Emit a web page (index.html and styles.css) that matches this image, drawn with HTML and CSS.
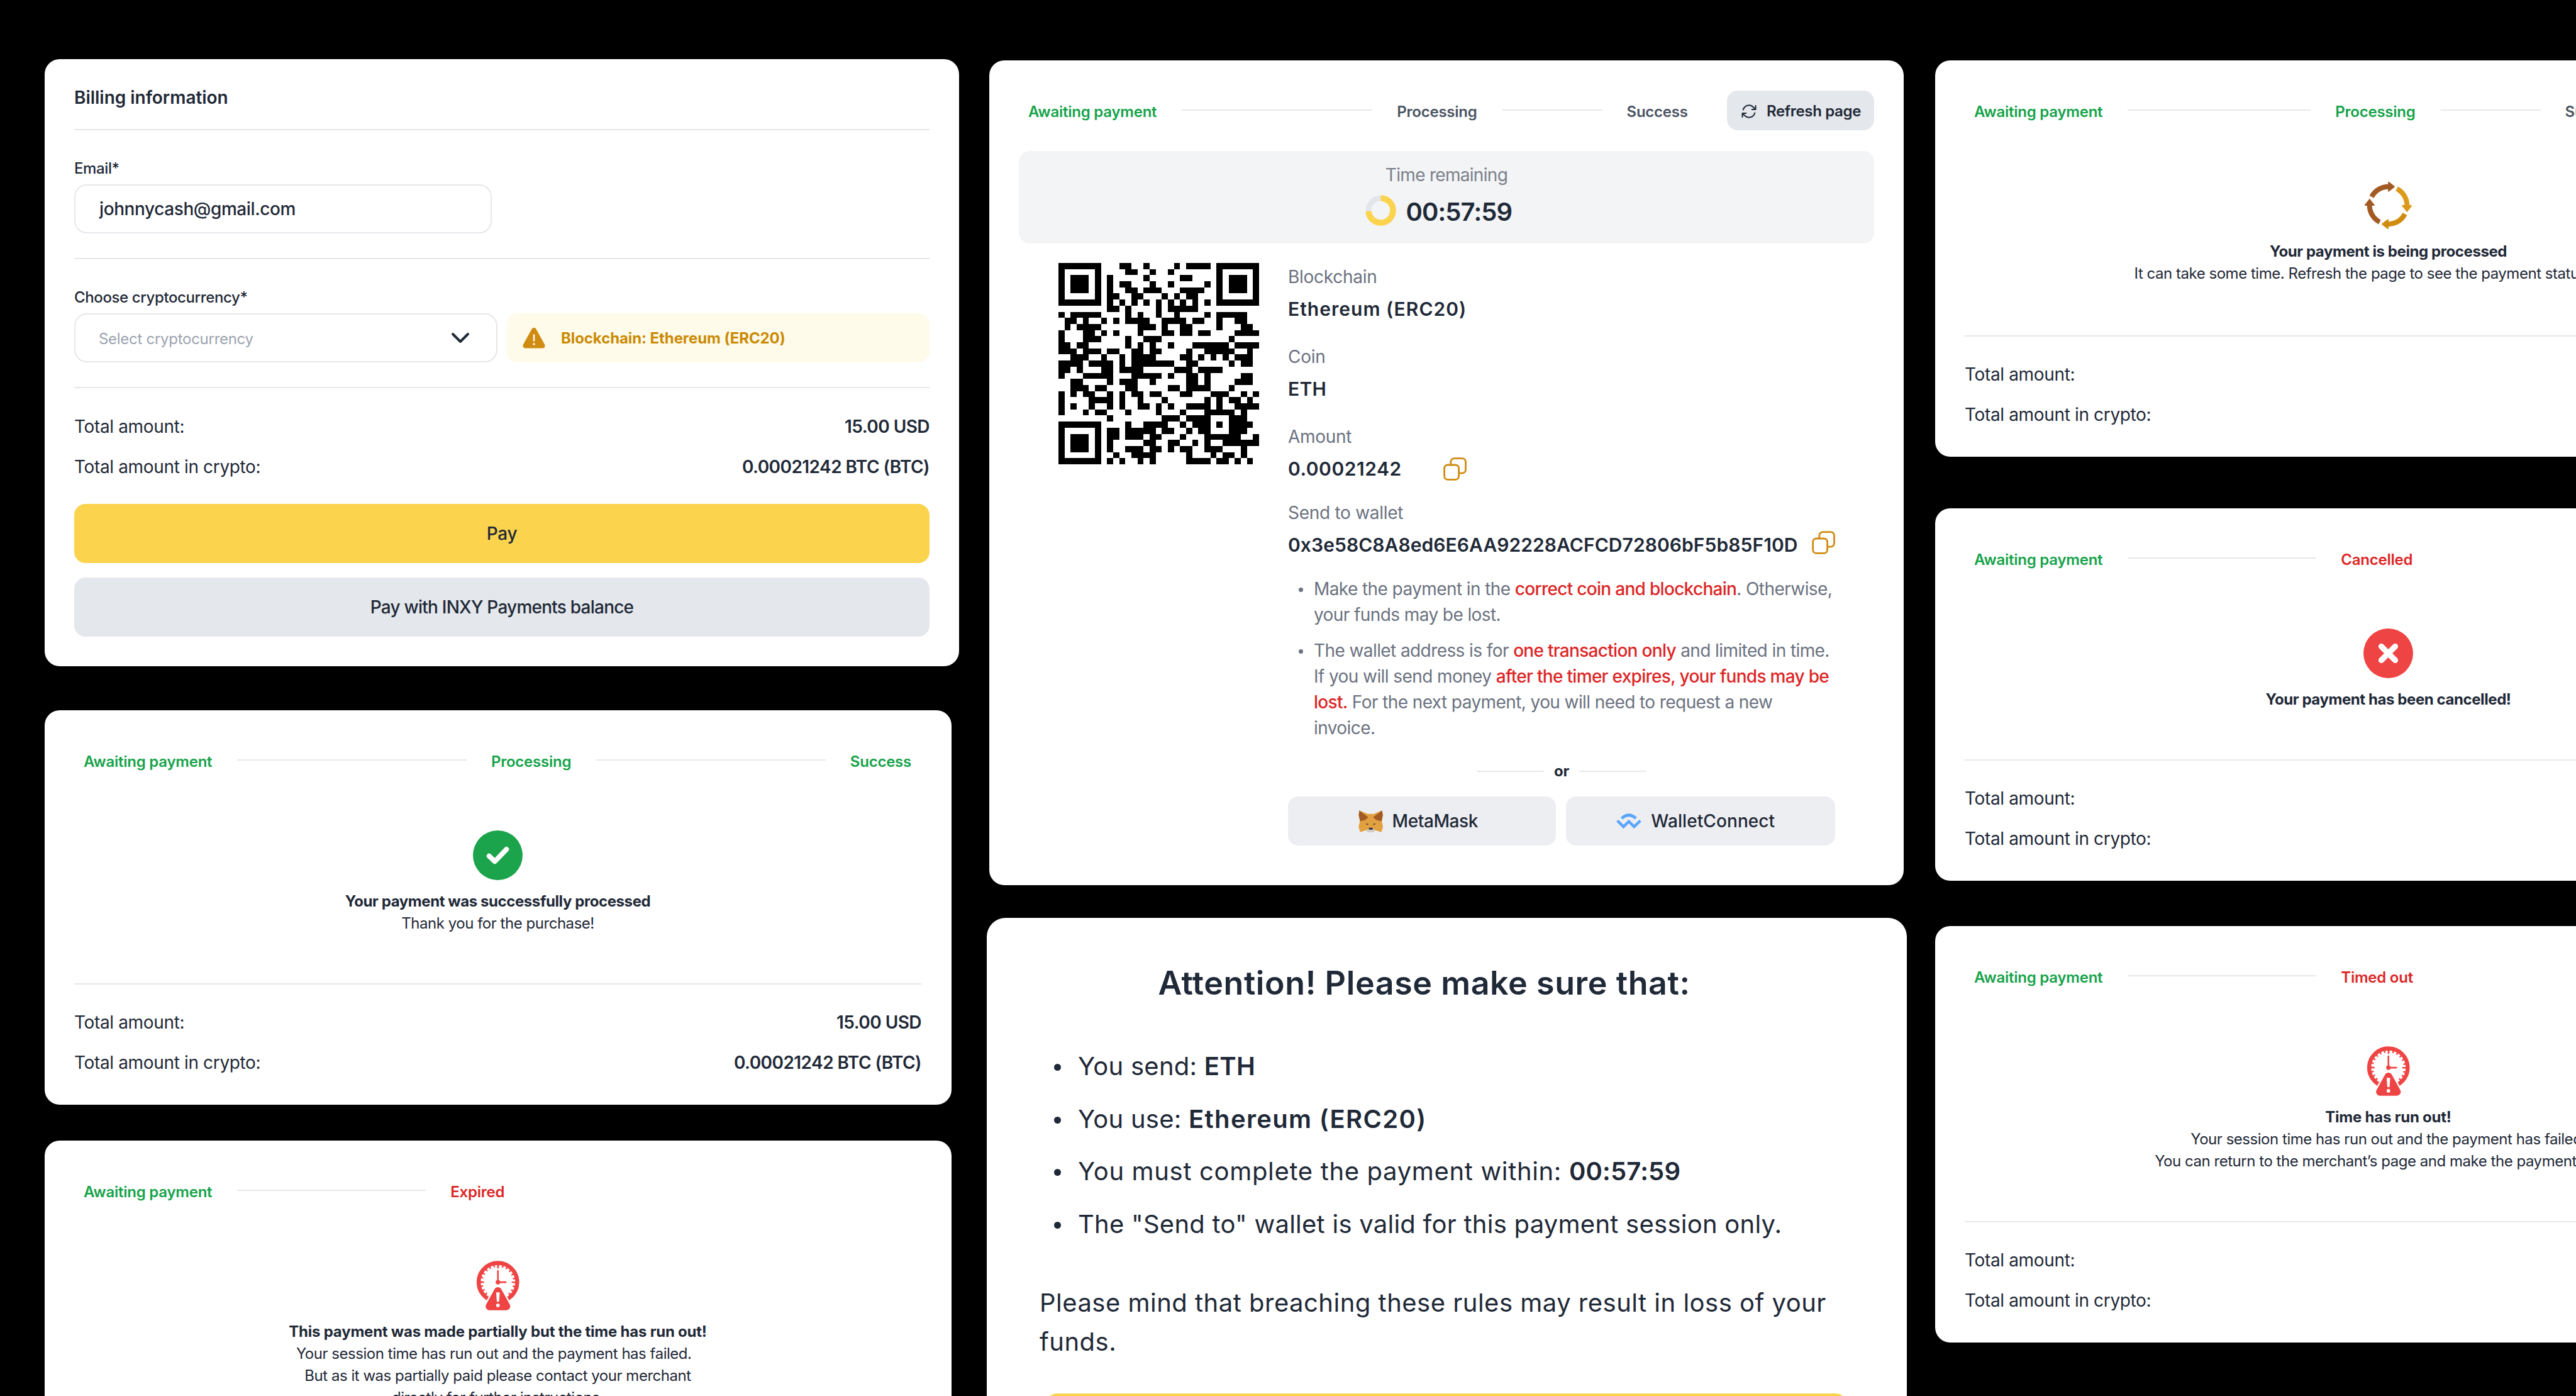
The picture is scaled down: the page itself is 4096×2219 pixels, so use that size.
FILE: index.html
```html
<!DOCTYPE html>
<html lang="en">
<head>
    <meta charset="UTF-8">
    <meta name="viewport" content="width=device-width, initial-scale=1.0">
    <title>Crypto payment screens</title>
    <link rel="stylesheet" href="styles.css">
</head>
<body>
    <!-- shared icons -->
    <svg class="sprite" width="0" height="0">
        <symbol id="icon-copy" viewBox="0 0 37 37">
            <rect x="1.6" y="12" width="23" height="23.4" rx="5.5" fill="none" stroke="#d08c12" stroke-width="2.8"/>
            <path d="M11.8 12V7.1a5.5 5.5 0 0 1 5.5-5.5H30a5.5 5.5 0 0 1 5.5 5.5v12.6a5.5 5.5 0 0 1-5.5 5.5h-5.2" fill="none" stroke="#d08c12" stroke-width="2.8"/>
        </symbol>
        <symbol id="icon-clock" viewBox="0 0 264 304">
            <circle cx="131" cy="131" r="119" fill="none" stroke="#ef4444" stroke-width="25"/>
            <circle cx="131" cy="131" r="102" fill="none" stroke="#ef4444" stroke-width="15" stroke-dasharray="9.5 17.2" stroke-dashoffset="4.75"/>
            <path d="M131 20v26M20 131h26M216 131h26" stroke="#ef4444" stroke-width="9"/>
            <path d="M131 61v70h49" fill="none" stroke="#ef4444" stroke-width="10" stroke-linecap="round"/>
            <circle cx="131" cy="131" r="14" fill="#ef4444"/>
            <path d="M131 186L79 280H183Z" fill="#fff" stroke="#fff" stroke-width="66" stroke-linejoin="round"/>
            <path d="M131 186L79 280H183Z" fill="#ef4444" stroke="#ef4444" stroke-width="48" stroke-linejoin="round"/>
            <path d="M120 194h22l-4 57h-14z" fill="#fff"/>
            <circle cx="131" cy="274" r="11" fill="#fff"/>
        </symbol>
    </svg>

    <div class="board">
        <div class="column column-left">
            <section class="card billing">
                <h2 class="billing-title">Billing information</h2>
                <div class="divider"></div>
                <label class="field-label">Email*</label>
                <div class="input email-input">johnnycash@gmail.com</div>
                <div class="divider"></div>
                <label class="field-label">Choose cryptocurrency*</label>
                <div class="crypto-row">
                    <div class="input select">
                        <span>Select cryptocurrency</span>
                        <svg width="30" height="18" viewBox="0 0 30 18"><path d="M3 3l12 12L27 3" fill="none" stroke="#1f2937" stroke-width="4" stroke-linecap="round" stroke-linejoin="round"/></svg>
                    </div>
                    <div class="notice">
                        <svg width="36" height="33" viewBox="0 0 36 33">
                            <path d="M18 4L4.5 28.500h27z" fill="#d08c12" stroke="#d08c12" stroke-width="8" stroke-linejoin="round"/>
                            <path d="M18 11.500v9" stroke="#fff" stroke-width="2.400" stroke-linecap="round"/>
                            <circle cx="18" cy="26" r="1.700" fill="#fff"/>
                        </svg>
                        <span>Blockchain: Ethereum (ERC20)</span>
                    </div>
                </div>
                <div class="divider"></div>
                <div class="total-row"><span>Total amount:</span><b>15.00 USD</b></div>
                <div class="total-row"><span>Total amount in crypto:</span><b>0.00021242 BTC (BTC)</b></div>
                <button class="btn btn-pay">Pay</button>
                <button class="btn btn-balance">Pay with INXY Payments balance</button>
            </section>

            <section class="card status success">
                <div class="steps">
                    <span class="done">Awaiting payment</span>
                    <i class="line line-fill"></i>
                    <span class="done">Processing</span>
                    <i class="line line-fill"></i>
                    <span class="done">Success</span>
                </div>
                <div class="result">
                    <svg class="result-icon" width="79" height="79" viewBox="0 0 100 100">
                        <circle cx="50" cy="50" r="50" fill="#1ba44b"/>
                        <path d="M32.500 51.500L44 62.500 67.500 38" fill="none" stroke="#fff" stroke-width="10" stroke-linecap="round" stroke-linejoin="round"/>
                    </svg>
                    <b>Your payment was successfully processed</b>
                    <p>Thank you for the purchase!</p>
                </div>
                <div class="divider"></div>
                <div class="total-row"><span>Total amount:</span><b>15.00 USD</b></div>
                <div class="total-row"><span>Total amount in crypto:</span><b>0.00021242 BTC (BTC)</b></div>
            </section>

            <section class="card status expired">
                <div class="steps">
                    <span class="done">Awaiting payment</span>
                    <i class="line"></i>
                    <span class="failed">Expired</span>
                </div>
                <div class="result">
                    <svg class="result-icon" width="68" height="79"><use href="#icon-clock"/></svg>
                    <b class="partial">This payment was made partially but the time has run out!</b>
                    <p>Your session time has run out and the payment has failed.&nbsp;&nbsp;</p>
                    <p>But as it was partially paid please contact your merchant</p>
                    <p>directly for further instructions.</p>
                </div>
                <div class="divider"></div>
                <div class="total-row"><span>Total amount:</span><b>15.00 USD</b></div>
                <div class="total-row"><span>Total amount in crypto:</span><b>0.00021242 BTC (BTC)</b></div>
            </section>
        </div>

        <div class="column column-center">
            <section class="card payment">
                <div class="payment-head">
                    <div class="steps">
                        <span class="done">Awaiting payment</span>
                        <i class="line line-wide"></i>
                        <span>Processing</span>
                        <i class="line line-short"></i>
                        <span>Success</span>
                    </div>
                    <button class="refresh">
                        <svg width="28" height="28" viewBox="0 0 24 24" fill="none" stroke="#1f2937" stroke-width="1.700" stroke-linecap="round" stroke-linejoin="round">
                            <path d="M16.023 9.348h4.992M2.985 19.644v-4.992h4.992m-4.993 0l3.181 3.183a8.250 8.250 0 0 0 13.803-3.700M4.031 9.865a8.250 8.250 0 0 1 13.803-3.700l3.181 3.182m0-4.991v4.990"/>
                        </svg>
                        <span>Refresh page</span>
                    </button>
                </div>
                <div class="timer">
                    <div class="timer-label">Time remaining</div>
                    <div class="timer-row">
                        <svg width="49" height="49" viewBox="0 0 49 49">
                            <circle cx="24.500" cy="24.500" r="19.500" fill="none" stroke="#e2e5ea" stroke-width="8.500"/>
                            <circle cx="24.500" cy="24.500" r="19.500" fill="none" stroke="#fcd34d" stroke-width="9.500" pathLength="100" stroke-dasharray="74 26" transform="rotate(-90 24.500 24.500)"/>
                        </svg>
                        <span class="timer-value">00:57:59</span>
                    </div>
                </div>
                <div class="payment-body">
                    <svg class="qr" id="qr" viewBox="0 0 33 33" preserveAspectRatio="none" shape-rendering="crispEdges"></svg>
                    <div class="details">
                        <div class="label">Blockchain</div>
                        <div class="value value-wide">Ethereum (ERC20)</div>
                        <div class="label">Coin</div>
                        <div class="value value-coin">ETH</div>
                        <div class="label">Amount</div>
                        <div class="value value-amount"><span>0.00021242</span><svg class="copy" width="37" height="37"><use href="#icon-copy"/></svg></div>
                        <div class="label label-wallet">Send to wallet</div>
                        <div class="value value-address"><span>0x3e58C8A8ed6E6AA92228ACFCD72806bF5b85F10D</span><svg class="copy" width="37" height="37"><use href="#icon-copy"/></svg></div>
                        <ul class="rules">
                            <li>Make the payment in the <em>correct coin and blockchain</em>. Otherwise,<br>your funds may be lost.</li>
                            <li>The wallet address is for <em>one transaction only</em> and limited in time.<br>If you will send money <em>after the timer expires, your funds may be<br>lost.</em> For the next payment, you will need to request a new<br>invoice.</li>
                        </ul>
                        <div class="or"><i></i><b>or</b><i></i></div>
                        <div class="wallets">
                            <button class="wallet">
                                <svg width="39" height="35" viewBox="57 70 148 134">
                                    <path d="M62 71L112 92H150L200 71 205 100 198 135 206 170 196 203 160 192 146 202H116L102 192 67 203 57 170 66 135 58 100Z" fill="#e2a040"/>
                                    <path d="M62 71L116 112 98 128 66 137 58 98Z" fill="#a35a24"/>
                                    <path d="M200 71L146 112 164 128 198 137 205 98Z" fill="#a35a24"/>
                                    <path d="M103 189L118 183H144L159 189 146 203H117Z" fill="#d3ccc8"/>
                                    <path d="M121 176H142L144 188H119Z" fill="#293645"/>
                                    <path d="M101 149L117 153 115 159 104 156ZM160 149L145 153 147 159 158 156Z" fill="#4b4038"/>
                                </svg>
                                <span>MetaMask</span>
                            </button>
                            <button class="wallet wallet-connect">
                                <svg width="40" height="24" viewBox="60 93 152 92">
                                    <path d="M92 123Q135 84 179 123" fill="none" stroke="#5aa5fb" stroke-width="18"/>
                                    <path d="M66 137L103 174 136 142 168 174 206 137" fill="none" stroke="#5aa5fb" stroke-width="17"/>
                                </svg>
                                <span>WalletConnect</span>
                            </button>
                        </div>
                    </div>
                </div>
            </section>

            <section class="card attention">
                <h1>Attention! Please make sure that:</h1>
                <ul>
                    <li>You send: <b>ETH</b></li>
                    <li>You use: <b class="wide">Ethereum (ERC20)</b></li>
                    <li class="deadline">You must complete the payment within: <b>00:57:59</b></li>
                    <li>The "Send to" wallet is valid for this payment session only.</li>
                </ul>
                <p>Please mind that breaching these rules may result in loss of your<br>funds.</p>
                <button class="btn btn-pay"></button>
            </section>
        </div>

        <div class="column column-right">
            <section class="card status processing">
                <div class="steps">
                    <span class="done">Awaiting payment</span>
                    <i class="line line-narrow"></i>
                    <span class="done">Processing</span>
                    <i class="line line-short"></i>
                    <span>Success</span>
                </div>
                <div class="result">
                    <svg class="result-icon" width="77" height="79" viewBox="60 64 300 300">
                        <g id="arrow"><path d="M107 161A116 116 0 0 1 212 98" fill="none" stroke="#a35a24" stroke-width="31"/><path d="M212 71L247 98 212 126Z" fill="#a35a24" stroke="#a35a24" stroke-width="7" stroke-linejoin="round"/></g>
                        <g transform="rotate(90 210 214)"><path d="M107 161A116 116 0 0 1 212 98" fill="none" stroke="#dc9a1c" stroke-width="31"/><path d="M212 71L247 98 212 126Z" fill="#dc9a1c" stroke="#dc9a1c" stroke-width="7" stroke-linejoin="round"/></g>
                        <g transform="rotate(180 210 214)"><path d="M107 161A116 116 0 0 1 212 98" fill="none" stroke="#d08c0e" stroke-width="31"/><path d="M212 71L247 98 212 126Z" fill="#d08c0e" stroke="#d08c0e" stroke-width="7" stroke-linejoin="round"/></g>
                        <use href="#arrow" transform="rotate(270 210 214)"/>
                    </svg>
                    <b>Your payment is being processed</b>
                    <p>It can take some time. Refresh the page to see the payment status update.</p>
                </div>
                <div class="divider"></div>
                <div class="total-row"><span>Total amount:</span><b>15.00 USD</b></div>
                <div class="total-row"><span>Total amount in crypto:</span><b>0.00021242 BTC (BTC)</b></div>
            </section>

            <section class="card status cancelled">
                <div class="steps">
                    <span class="done">Awaiting payment</span>
                    <i class="line"></i>
                    <span class="failed">Cancelled</span>
                </div>
                <div class="result">
                    <svg class="result-icon" width="79" height="79" viewBox="0 0 100 100">
                        <circle cx="50" cy="50" r="50" fill="#ef4444"/>
                        <path d="M36 36L64 64M64 36L36 64" stroke="#fff" stroke-width="11.500" stroke-linecap="round"/>
                    </svg>
                    <b>Your payment has been cancelled!</b>
                </div>
                <div class="divider"></div>
                <div class="total-row"><span>Total amount:</span><b>15.00 USD</b></div>
                <div class="total-row"><span>Total amount in crypto:</span><b>0.00021242 BTC (BTC)</b></div>
            </section>

            <section class="card status timed-out">
                <div class="steps">
                    <span class="done">Awaiting payment</span>
                    <i class="line"></i>
                    <span class="failed">Timed out</span>
                </div>
                <div class="result">
                    <svg class="result-icon" width="68" height="79"><use href="#icon-clock"/></svg>
                    <b class="partial">Time has run out!</b>
                    <p>Your session time has run out and the payment has failed.</p>
                    <p>You can return to the merchant’s page and make the payment again.</p>
                </div>
                <div class="divider"></div>
                <div class="total-row"><span>Total amount:</span><b>15.00 USD</b></div>
                <div class="total-row"><span>Total amount in crypto:</span><b>0.00021242 BTC (BTC)</b></div>
            </section>
        </div>
    </div>

    <script>
        // dark modules of every QR row: single columns or start-end ranges (end excluded)
        const qrRows = [
            "0-7 10-12 14 19 21-25 26-33",
            "0 6 11-13 15 18 26 32",
            "0 2-5 6 8 14 20-22 26 28-31 32",
            "0 2-5 6 8 10-12 15 18 24 26 28-31 32",
            "0 2-5 6 8 11-13 14-17 20-24 26 28-31 32",
            "0 6 8-10 12-14 17 19 21-23 26 32",
            "0-7 8 10 12 14 16 18 20 22 24 26-33",
            "8-10 11 16 18-23",
            "0 2-7 11 13 16 19 24 26-31",
            "1-3 4 7 9 11-15 17-21 22-24 26 29-31",
            "1 3-7 13-16 17 20-22 26 30-32",
            "0 4-6 7 9 13 17-19 20-22 23-25 29-33",
            "0 4-7 11 14-17 28",
            "0-2 3-5 11 13 15 18 22-28 29-33",
            "0-3 4-7 8-10 12-14 15-17 21 24-29 31",
            "2-5 7 10 12-16 20-22 23 25 27 29-32",
            "0-4 5-9 10 12-19 21-23 28 30-32",
            "0-2 3 7-9 10-14 19-22 23-27",
            "0 4-9 12-17 18 21-23 24 30-32",
            "2-4 8 10-13 15 21-23 24 29-32",
            "2-5 6-8 11-13 18-20 21-25 28",
            "0 2 4-6 8 10 12-14 15-17 20-22 25-28 30 32",
            "0 5-9 10 13 17 24 26 28-30 31",
            "0 2 5 8 10 13-15 16 18 21-25 26 29-33",
            "0 4 6-8 11 16 20 24-29 30",
            "8 17-20 21-25 28-31",
            "0-7 11 14-18 20 22-25 26 28-32",
            "0 6 8-10 11-16 17-19 21 23-25 28-31",
            "0 2-5 6 8-10 11-14 15-17 20 24-30 32",
            "0 2-5 6 8 14-16 18-20 22 24 27-33",
            "0 2-5 6 8 11-14 15-17 18 20-22 24-27 30",
            "0 6 9 12-16 21 25 27-29 30",
            "0-7 8 10 13 15 21-25 26-28 29 31"
        ];
        let d = "";
        qrRows.forEach((row, y) => {
            row.split(" ").forEach(run => {
                const [start, end] = run.split("-").map(Number);
                d += `M${start} ${y}H${end || start + 1}V${y + 1}H${start}Z`;
            });
        });
        document.getElementById("qr").innerHTML = `<path d="${d}" fill="#000"/>`;
    </script>
</body>
</html>
```
FILE: styles.css
```css
* {
    box-sizing: border-box;
}
body {
    margin: 0;
    height: 2219px;
    overflow: hidden;
    background: #000;
    color: #1f2937;
    font-family: Inter, sans-serif;
    font-size: 28px;
    letter-spacing: -0.01em;
}
h1, h2, p, ul {
    margin: 0;
    padding: 0;
}
ul {
    list-style: none;
}
button {
    border: none;
    color: inherit;
    font-family: inherit;
    padding: 0;
}
svg {
    flex: none;
    display: block;
}
.sprite {
    position: absolute;
}
.board {
    display: flex;
    gap: 45px;
    width: 4096px;
    height: 2219px;
    overflow: hidden;
    padding-left: 71px;
}
.column {
    display: flex;
    flex-direction: column;
    flex: none;
}
.column-left {
    width: 1454px;
    padding-top: 94px;
}
.column-center {
    width: 1463px;
    padding-top: 96px;
    margin-left: -1px;
}
.column-right {
    width: 1442px;
    padding-top: 96px;
}
.card {
    background: #fff;
    border-radius: 24px;
    flex: none;
}
.divider {
    height: 2px;
    background: #e5e7eb;
}

/* billing */
.billing {
    padding: 43px 47px 47px;
}
.billing-title {
    font-size: 28px;
    font-weight: 600;
    line-height: 36px;
    letter-spacing: -0.001em;
    margin-bottom: 32px;
}
.field-label {
    display: block;
    font-size: 24px;
    font-weight: 500;
    line-height: 32px;
    letter-spacing: -0.016em;
    padding-top: 45px;
    margin-bottom: 9px;
}
.input {
    height: 78px;
    border: 2px solid #e5e7eb;
    border-radius: 20px;
    padding: 0 38px;
    display: flex;
    align-items: center;
}
.email-input {
    width: 664px;
    font-weight: 500;
    letter-spacing: -0.0145em;
    margin-bottom: 39px;
}
.crypto-row {
    display: flex;
    gap: 15px;
    margin-bottom: 39px;
}
.select {
    width: 673px;
    justify-content: space-between;
    color: #9ca3af;
    font-size: 24px;
    padding: 2px 42px 0 37px;
}
.select svg {
    margin-bottom: 2px;
}
.notice {
    flex: 1;
    display: flex;
    align-items: center;
    gap: 25px;
    padding: 0 25px;
    background: #fffbeb;
    border-radius: 17px;
    color: #ca8a04;
    font-size: 24px;
    font-weight: 700;
    letter-spacing: -0.004em;
}
.total-row {
    display: flex;
    justify-content: space-between;
    line-height: 40px;
    letter-spacing: -0.0125em;
}
.total-row b {
    font-weight: 600;
    letter-spacing: -0.02em;
}
.divider + .total-row {
    margin: 41px 0 24px;
}
.btn {
    display: block;
    width: 100%;
    height: 94px;
    border-radius: 18px;
    font-size: 28px;
    font-weight: 500;
}
.btn-pay {
    background: #fcd34d;
    letter-spacing: -0.01em;
}
.billing .btn-pay {
    margin: 39px 0 23px;
}
.btn-balance {
    background: #e4e7eb;
    letter-spacing: -0.0275em;
}

/* steps */
.steps {
    display: flex;
    align-items: center;
    gap: 39px;
    height: 32px;
    padding: 0 16px 0 15px;
    font-size: 24px;
    font-weight: 600;
    line-height: 32px;
    letter-spacing: -0.01em;
    color: #4b5563;
    white-space: nowrap;
}
.steps span {
    padding-top: 4px;
}
.steps .done {
    color: #16a34a;
}
.steps .failed {
    color: #dc2626;
}
.line {
    width: 300px;
    height: 2px;
    margin: 0 0 2px 1px;
    background: #e5e7eb;
}
.line-fill {
    flex: 1;
}
.line-wide {
    width: 303px;
}
.line-narrow {
    width: 291px;
}
.line-short {
    width: 159px;
}

/* status cards */
.status {
    width: 1442px;
    padding: 64px 48px 47px 47px;
}
.result {
    display: flex;
    flex-direction: column;
    align-items: center;
    padding: 95px 0 78px;
    font-size: 24px;
    line-height: 35px;
    letter-spacing: -0.0195em;
    white-space: nowrap;
}
.result b {
    font-weight: 700;
    letter-spacing: -0.0175em;
}
.result .partial {
    letter-spacing: -0.0095em;
}
.result-icon {
    margin-bottom: 16px;
}
.status .divider + .total-row {
    margin-top: 40px;
}
.success {
    margin: 70px 0 57px;
}
.processing .result {
    padding-bottom: 81px;
}
.cancelled {
    margin: 82px 0 72px;
}

/* payment details */
.payment {
    width: 1454px;
    margin-left: 4px;
    padding: 48px 47px 63px;
}
.payment-head {
    display: flex;
    justify-content: space-between;
    align-items: center;
    height: 63px;
}
.refresh {
    width: 234px;
    height: 63px;
    display: flex;
    align-items: center;
    gap: 14px;
    padding: 2px 0 0 21px;
    border-radius: 17px;
    background: #e4e7eb;
    font-size: 24px;
    font-weight: 600;
    letter-spacing: -0.0145em;
}
.timer {
    margin-top: 33px;
    height: 147px;
    padding-top: 20px;
    border-radius: 17px;
    background: #f3f4f6;
}
.timer-label {
    text-align: center;
    line-height: 36px;
    letter-spacing: -0.025em;
    color: #7b818b;
}
.timer-row {
    display: flex;
    justify-content: center;
    gap: 16px;
    margin-top: 14px;
    line-height: 53px;
}
.timer-value {
    width: 194px;
    font-size: 40px;
    font-weight: 600;
    letter-spacing: -0.0225em;
}
.payment-body {
    display: flex;
    padding-left: 63px;
}
.qr {
    width: 319px;
    height: 320px;
    margin: 31px 46px 0 0;
}
.details {
    width: 870px;
    padding-top: 33px;
}
.label {
    line-height: 40px;
    color: #6b7280;
    margin-bottom: 10px;
}
.value {
    display: flex;
    align-items: center;
    height: 42px;
    font-size: 30px;
    font-weight: 600;
    margin-bottom: 35px;
    white-space: nowrap;
}
.value-wide {
    letter-spacing: 0.034em;
}
.value-coin {
    letter-spacing: 0.01em;
}
.value-amount {
    gap: 66px;
    letter-spacing: 0.018em;
    margin-bottom: 29px;
}
.value-address {
    justify-content: space-between;
    letter-spacing: 0.0022em;
    margin-bottom: 29px;
}
.value-address .copy {
    margin-bottom: 8px;
}
.rules li {
    position: relative;
    padding-left: 41px;
    line-height: 41px;
    letter-spacing: -0.021em;
    color: #6b7280;
    white-space: nowrap;
}
.rules li + li {
    margin-top: 16px;
}
.rules li::before, .attention li::before {
    content: "";
    position: absolute;
    left: 17px;
    top: 18px;
    width: 7px;
    height: 7px;
    border-radius: 50%;
    background: currentColor;
}
.rules em {
    font-style: normal;
    font-weight: 450;
    color: #dc2626;
    letter-spacing: -0.025em;
}
.or {
    display: flex;
    justify-content: center;
    align-items: center;
    gap: 16px;
    margin: 32px 0 24px;
    font-size: 24px;
    line-height: 32px;
}
.or i {
    width: 107px;
    height: 2px;
    background: #e5e7eb;
}
.wallets {
    display: flex;
    gap: 16px;
}
.wallet {
    flex: 1;
    height: 78px;
    display: flex;
    align-items: center;
    justify-content: center;
    gap: 15px;
    padding-right: 12px;
    border-radius: 16px;
    background: #edeef2;
    font-size: 28px;
    font-weight: 500;
    letter-spacing: -0.015em;
}
.wallet-connect {
    padding-right: 15px;
    letter-spacing: 0.003em;
}

/* attention dialog */
.attention {
    margin-top: 52px;
    padding: 72px 96px 60px 84px;
    border-radius: 30px;
}
.attention h1 {
    margin-right: 60px;
    text-align: center;
    font-size: 52px;
    font-weight: 600;
    line-height: 64px;
    letter-spacing: 0.0109em;
}
.attention ul {
    margin: 70px 0 64px;
    display: flex;
    flex-direction: column;
    gap: 23.6px;
}
.attention li {
    position: relative;
    padding-left: 61px;
    font-size: 40px;
    line-height: 60px;
    letter-spacing: 0.0062em;
}
.attention li::before {
    left: 23px;
    top: 26px;
    width: 11px;
    height: 11px;
}
.attention li b {
    font-weight: 600;
}
.attention li .wide {
    letter-spacing: 0.033em;
}
.attention .deadline {
    letter-spacing: 0.0165em;
}
.attention .deadline b {
    letter-spacing: 0.004em;
}
.attention p {
    font-size: 40px;
    line-height: 62px;
    letter-spacing: 0.0122em;
    white-space: nowrap;
}
.attention .btn-pay {
    margin: 51px 0 0 10px;
    width: 1274px;
}
```
